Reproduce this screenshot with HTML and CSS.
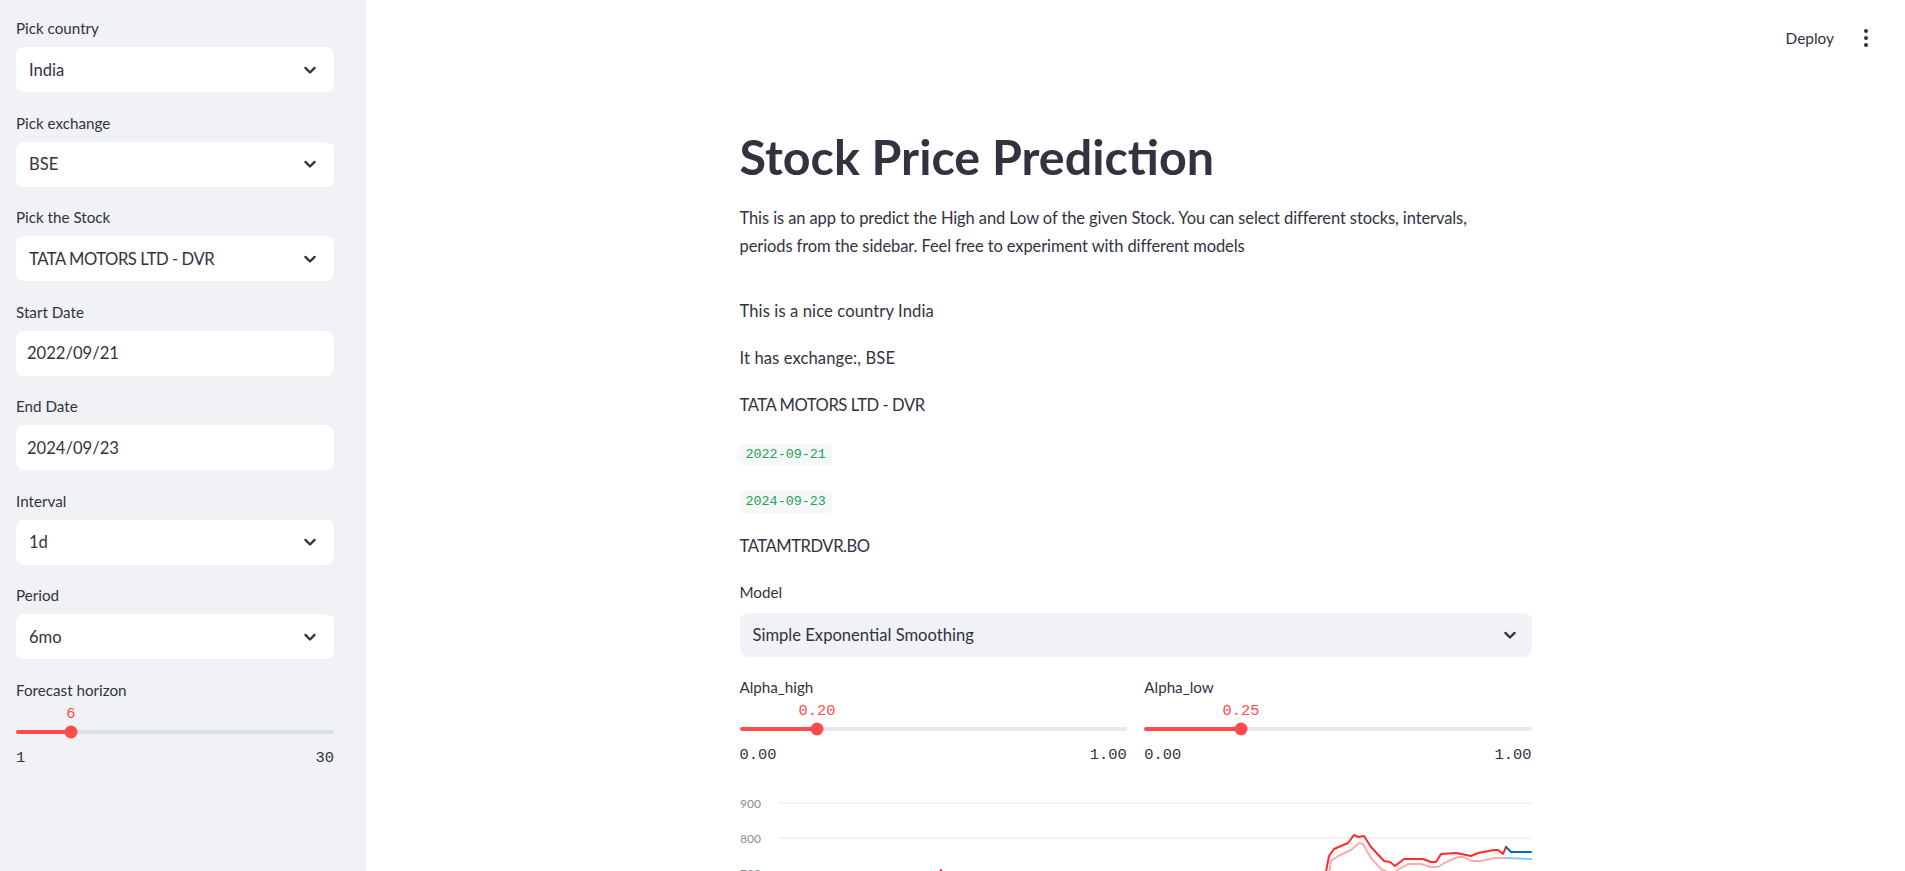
FILE: index.html
```html
<!DOCTYPE html>
<html lang="en">
<head>
<meta charset="utf-8">
<title>Stock Price Prediction</title>
<link rel="stylesheet" href="styles.css">
</head>
<body>
<div class="app">
  <aside class="sidebar">
    <div class="widget">
      <div class="label">Pick country</div>
      <div class="select"><span>India</span><svg class="chev" viewBox="0 0 24 24"><path d="M6.5 9.5 L12 15 L17.5 9.5"/></svg></div>
    </div>
    <div class="widget">
      <div class="label">Pick exchange</div>
      <div class="select"><span>BSE</span><svg class="chev" viewBox="0 0 24 24"><path d="M6.5 9.5 L12 15 L17.5 9.5"/></svg></div>
    </div>
    <div class="widget">
      <div class="label">Pick the Stock</div>
      <div class="select"><span class="caps">TATA MOTORS LTD - DVR</span><svg class="chev" viewBox="0 0 24 24"><path d="M6.5 9.5 L12 15 L17.5 9.5"/></svg></div>
    </div>
    <div class="widget">
      <div class="label">Start Date</div>
      <div class="select date"><span>2022/09/21</span></div>
    </div>
    <div class="widget">
      <div class="label">End Date</div>
      <div class="select date"><span>2024/09/23</span></div>
    </div>
    <div class="widget">
      <div class="label">Interval</div>
      <div class="select"><span>1d</span><svg class="chev" viewBox="0 0 24 24"><path d="M6.5 9.5 L12 15 L17.5 9.5"/></svg></div>
    </div>
    <div class="widget">
      <div class="label">Period</div>
      <div class="select"><span>6mo</span><svg class="chev" viewBox="0 0 24 24"><path d="M6.5 9.5 L12 15 L17.5 9.5"/></svg></div>
    </div>
    <div class="widget">
      <div class="label slabel">Forecast horizon</div>
      <div class="slider">
        <div class="slider-value"><span style="margin-left: 17.24%">6</span></div>
        <div class="track-wrap">
          <div class="track"><div class="fill" style="width: 17.24%"></div></div>
          <div class="thumb" style="left: 17.24%"></div>
        </div>
        <div class="ticks"><span>1</span><span>30</span></div>
      </div>
    </div>
  </aside>

  <main class="main">
    <header class="topbar">
      <span class="deploy">Deploy</span>
      <svg class="kebab" viewBox="0 0 20 20"><circle cx="10" cy="3" r="2"/><circle cx="10" cy="10" r="2"/><circle cx="10" cy="17" r="2"/></svg>
    </header>
    <div class="content">
      <h1 class="title">Stock Price Prediction</h1>
      <p class="intro">This is an app to predict the High and Low of the given Stock. You can select different stocks, intervals, periods from the sidebar. Feel free to experiment with different models</p>
      <p class="text first">This is a nice country India</p>
      <p class="text">It has exchange:, BSE</p>
      <p class="text caps">TATA MOTORS LTD - DVR</p>
      <p class="text code-line"><code>2022-09-21</code></p>
      <p class="text code-line"><code>2024-09-23</code></p>
      <p class="text caps">TATAMTRDVR.BO</p>

      <div class="label model-label">Model</div>
      <div class="select main-select"><span>Simple Exponential Smoothing</span><svg class="chev" viewBox="0 0 24 24"><path d="M6.5 9.5 L12 15 L17.5 9.5"/></svg></div>

      <div class="cols">
        <div class="widget">
          <div class="label slabel">Alpha_high</div>
          <div class="slider">
            <div class="slider-value"><span style="margin-left: 20%">0.20</span></div>
            <div class="track-wrap">
              <div class="track"><div class="fill" style="width: 20%"></div></div>
              <div class="thumb" style="left: 20%"></div>
            </div>
            <div class="ticks"><span>0.00</span><span>1.00</span></div>
          </div>
        </div>
        <div class="widget">
          <div class="label slabel">Alpha_low</div>
          <div class="slider">
            <div class="slider-value"><span style="margin-left: 25%">0.25</span></div>
            <div class="track-wrap">
              <div class="track"><div class="fill" style="width: 25%"></div></div>
              <div class="thumb" style="left: 25%"></div>
            </div>
            <div class="ticks"><span>0.00</span><span>1.00</span></div>
          </div>
        </div>
      </div>

      <div class="chart">
        <svg width="792" height="200" viewBox="0 0 792 200">
          <g class="grid">
            <line x1="38" y1="22" x2="791" y2="22"/>
            <line x1="38" y1="57" x2="791" y2="57"/>
            <line x1="38" y1="92.5" x2="791" y2="92.5"/>
          </g>
          <g class="ylab">
            <text x="21" y="26.5">900</text>
            <text x="21" y="61.5">800</text>
            <text x="21" y="97">700</text>
          </g>
          <polyline class="l-pink" points="520,125 534,92 556,92 562,125"/>
          <polyline class="l-red" points="195,115 201,89 206,115"/>
          <polyline class="l-pink" points="586,112 591,80 598,75 611,69 619,62 623,63 631,77 641,88 651,93 668,83 681,83 691,86 698,86 704,82 718,76 724,76 731,80 741,80 754,77 766,77"/>
          <polyline class="l-lblue" points="766,77 791,78"/>
          <polyline class="l-red" points="582,112 589,75 594,68 608,62 614,54 618,56 624,55 631,66 644,80 650,81 655,85 664,78 683,78 691,81 696,81 701,73 716,72 721,73 731,75 738,72 754,69 758,69 763,73 766,66"/>
          <polyline class="l-blue" points="766,66 771,71 791,71"/>
        </svg>
      </div>
    </div>
  </main>
</div>
</body>
</html>
```

FILE: styles.css
```css
html, body {
  margin: 0;
  padding: 0;
}

body {
  font-family: Lato, "Liberation Sans", sans-serif;
  color: #31333f;
  background: #ffffff;
  overflow: hidden;
}

.app {
  display: flex;
  height: 871px;
}

/* ---------- Sidebar ---------- */
.sidebar {
  width: 366px;
  flex: none;
  box-sizing: border-box;
  background: #f0f2f6;
  padding: 17px 32px 0 16px;
  display: flex;
  flex-direction: column;
  gap: 19.5px;
}

.widget {
  display: flex;
  flex-direction: column;
  min-width: 0;
}

.label {
  font-size: 15.2px;
  line-height: 22px;
  margin-bottom: 8px;
  color: #31333f;
}

.label.slabel {
  margin-bottom: 3px;
}

.select {
  height: 45px;
  box-sizing: border-box;
  background: #ffffff;
  border-radius: 8px;
  display: flex;
  align-items: center;
  justify-content: space-between;
  padding: 0 14px 0 13px;
  font-size: 16.6px;
  color: #31333f;
}

.select.date {
  padding-left: 11px;
}

.caps {
  letter-spacing: -0.45px;
}

.chev {
  width: 20px;
  height: 20px;
  flex: none;
  fill: none;
  stroke: #31333f;
  stroke-width: 2.8;
  stroke-linecap: round;
  stroke-linejoin: round;
}

/* ---------- Slider ---------- */
.slider {
  display: flex;
  flex-direction: column;
}

.slider-value {
  height: 20px;
  line-height: 20px;
  font-family: "Liberation Mono", "DejaVu Sans Mono", monospace;
  font-size: 15.4px;
  color: #ff4b4b;
  white-space: nowrap;
}

.slider-value span {
  display: inline-block;
  transform: translateX(-50%);
}

.track-wrap {
  position: relative;
  height: 16px;
  display: flex;
  align-items: center;
}

.track {
  width: 100%;
  height: 4px;
  border-radius: 2px;
  background: rgba(151, 166, 195, 0.25);
  overflow: hidden;
}

.fill {
  height: 100%;
  background: #ff4b4b;
}

.thumb {
  position: absolute;
  top: 50%;
  width: 13px;
  height: 13px;
  border-radius: 50%;
  background: #ff4b4b;
  transform: translate(-50%, -50%);
}

.ticks {
  margin-top: 8px;
  display: flex;
  justify-content: space-between;
  font-family: "Liberation Mono", "DejaVu Sans Mono", monospace;
  font-size: 15.4px;
  line-height: 20px;
  color: #31333f;
}

/* ---------- Main ---------- */
.main {
  flex: 1;
  min-width: 0;
  display: flex;
  flex-direction: column;
}

.topbar {
  height: 76px;
  flex: none;
  display: flex;
  justify-content: flex-end;
  align-items: center;
  gap: 22px;
  padding-right: 29px;
}

.deploy {
  font-size: 15.4px;
  color: #31333f;
  margin-top: -1px;
}

.kebab {
  width: 20px;
  height: 20px;
  fill: #31333f;
}

.content {
  width: 792px;
  margin: 0 auto;
}

.title {
  font-size: 48.4px;
  line-height: 58px;
  font-weight: 700;
  margin: 51.3px 0 0;
  color: #31333f;
}

.intro {
  font-size: 16.5px;
  line-height: 28px;
  margin: 18.5px 0 0;
  letter-spacing: -0.1px;
  max-width: 775px;
}

.text {
  font-size: 16.6px;
  line-height: 28px;
  margin: 19px 0 0;
  height: 28px;
  letter-spacing: 0.1px;
}

.text.caps {
  letter-spacing: -0.45px;
}

.text.first {
  margin-top: 37px;
}

.code-line {
  display: flex;
  align-items: flex-end;
}

.code-line code {
  font-family: "Liberation Mono", "DejaVu Sans Mono", monospace;
  font-size: 13.4px;
  line-height: 22px;
  height: 22px;
  padding: 0 6px;
  border-radius: 4px;
  background: #f6f7f9;
  color: #21a350;
  letter-spacing: 0;
}

.model-label {
  margin-top: 21px;
  margin-bottom: 10px;
}

.main-select {
  height: 44px;
  background: #f0f2f6;
  padding: 0 12px 0 13px;
}

.cols {
  display: grid;
  grid-template-columns: 1fr 1fr;
  column-gap: 17.6px;
  margin-top: 19px;
}

.chart {
  margin-top: 16px;
}

.chart svg {
  display: block;
  overflow: visible;
}

.grid line {
  stroke: #e6e7ea;
  stroke-width: 1;
}

.ylab text {
  font-family: Lato, "Liberation Sans", sans-serif;
  font-size: 12px;
  fill: #8a8c96;
  text-anchor: end;
}

.l-red, .l-pink, .l-blue, .l-lblue {
  fill: none;
  stroke-width: 2;
  stroke-linejoin: round;
  stroke-linecap: round;
}

.l-red { stroke: #ff2b2b; }
.l-pink { stroke: #ffabab; }
.l-blue { stroke: #0068c9; }
.l-lblue { stroke: #83c9ff; }
```
